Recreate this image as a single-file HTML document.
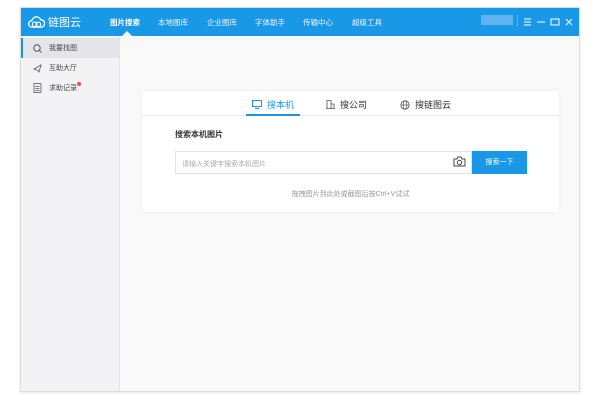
<!DOCTYPE html>
<html><head><meta charset="utf-8"><style>
*{margin:0;padding:0;box-sizing:border-box}
body{width:600px;height:400px;background:#fff;position:relative;overflow:hidden;font-family:"Liberation Sans","Noto Sans CJK SC",sans-serif;}
.win{position:absolute;left:20px;top:7px;width:560px;height:385px;border:1px solid #ddd;background:#f9f9f9;box-shadow:0 1px 3px rgba(0,0,0,.1)}
.top{position:absolute;left:0;top:0;width:100%;height:28px;background:#1a98e8;color:#fff}
.logo{position:absolute;left:7px;top:6px;font-size:11px;display:flex;align-items:center;gap:3px}
.nav{position:absolute;left:89px;top:9px;font-size:7.5px;white-space:nowrap}
.nav span{position:absolute;top:0;opacity:.92}
.nav span.a{font-weight:bold;opacity:1}
.tri{position:absolute;left:101px;top:23px;width:0;height:0;border-left:5px solid transparent;border-right:5px solid transparent;border-bottom:5px solid #f9f9f9}
.side{position:absolute;left:0;top:28px;width:99px;bottom:0;background:#f3f3f5;border-right:1px solid #e3e3e3}
.it{height:20px;font-size:7px;color:#444;display:flex;align-items:center;padding-left:12px;gap:7px;position:relative}
.it.a{background:#e4e5e8;border-left:2px solid #1a98e8;padding-left:10px}
.card{position:absolute;left:121px;top:83px;width:417px;height:121px;background:#fff;border-radius:3px;box-shadow:0 0 3px rgba(0,0,0,.06)}
.tabs{height:25px;border-bottom:1px solid #e6e6e6;position:relative;font-size:9px;color:#333}
.tab{position:absolute;top:7px;display:flex;align-items:center;gap:5px}
.ul{position:absolute;left:104px;top:23px;width:54px;height:2px;background:#1a98e8}
</style></head><body>
<div class="win">
 <div class="top">
  <div class="logo"><svg width="17" height="13" viewBox="0 0 18 14"><path d="M4 12a3.5 3.5 0 0 1 0-7 5 5 0 0 1 9.5-1A4 4 0 0 1 14 12z" fill="none" stroke="#fff" stroke-width="1.4"/><circle cx="7" cy="9" r="2.5" fill="none" stroke="#fff" stroke-width="1.2"/><circle cx="11" cy="9" r="2.5" fill="none" stroke="#fff" stroke-width="1.2"/></svg><span>链图云</span></div>
  <div class="nav"><span class="a" style="left:0">图片搜索</span><span style="left:48px">本地图库</span><span style="left:97px">企业图库</span><span style="left:145px">字体助手</span><span style="left:193px">传输中心</span><span style="left:242px">超级工具</span></div>
  <div style="position:absolute;left:460px;top:7px;width:32px;height:10px;background:#5eb4ef"></div>
  <div style="position:absolute;left:496px;top:7px;width:1px;height:12px;background:#5cb3ee"></div>
  <svg style="position:absolute;left:502px;top:9px" width="52" height="10"><path d="M1 2h7M1 5h7M1 8h7M14 5h8M28 2h8v6h-8zM43 2l6 6M49 2l-6 6" fill="none" stroke="#fff" stroke-width="1"/></svg>
 </div>
 <div class="tri"></div>
 <div class="side">
  <div class="it a" style="margin-top:2px"><svg width="9" height="9"><circle cx="4" cy="4" r="3.2" fill="none" stroke="#555"/><path d="M6.3 6.3l2.3 2.3" stroke="#555"/></svg>我要找图</div>
  <div class="it"><svg width="9" height="9"><path d="M1 5l7-4-2 7-2-2z" fill="none" stroke="#555" stroke-width=".8"/></svg>互助大厅</div>
  <div class="it"><svg width="9" height="10"><rect x="1" y=".5" width="7" height="9" fill="none" stroke="#555" stroke-width=".8"/><path d="M2.5 3.5h4M2.5 5.5h4M2.5 7.5h4" stroke="#555" stroke-width=".7"/></svg>求助记录<span style="position:absolute;left:56px;top:4px;width:4px;height:4px;border-radius:50%;background:#f44"></span></div>
 </div>
 <div class="card">
  <div class="tabs">
   <div class="tab" style="left:110px;color:#1a98e8"><svg width="10" height="9"><rect x=".5" y=".5" width="9" height="6" fill="none" stroke="#1a98e8"/><path d="M3 8.5h4" stroke="#1a98e8"/></svg>搜本机</div>
   <div class="tab" style="left:184px"><svg width="9" height="9"><path d="M1 8.5V.5h4v8M5 4h3v4.5M0 8.5h9" fill="none" stroke="#555" stroke-width=".8"/></svg>搜公司</div>
   <div class="tab" style="left:258px"><svg width="10" height="10"><circle cx="5" cy="5" r="4.2" fill="none" stroke="#555" stroke-width=".8"/><ellipse cx="5" cy="5" rx="1.8" ry="4.2" fill="none" stroke="#555" stroke-width=".7"/><path d="M1 5h8" stroke="#555" stroke-width=".7"/></svg>搜链图云</div>
   <div class="ul"></div>
  </div>
  <div style="position:absolute;left:33px;top:38px;font-size:8px;font-weight:bold;color:#333">搜索本机图片</div>
  <div style="position:absolute;left:33px;top:60px;width:297px;height:23px;border:1px solid #e3e3e3;font-size:7px;color:#aaa;padding:7px 6px">请输入关键字搜索本机图片</div>
  <svg style="position:absolute;left:311px;top:65px" width="13" height="11"><path d="M1 3h3l1-2h3l1 2h3v7H1z" fill="none" stroke="#444" stroke-width="1"/><circle cx="6.5" cy="6.5" r="2.2" fill="none" stroke="#444"/></svg>
  <div style="position:absolute;left:330px;top:60px;width:55px;height:23px;background:#1a98e8;color:#fff;font-size:7px;text-align:center;line-height:23px">搜索一下</div>
  <div style="position:absolute;left:0;width:100%;top:98px;text-align:center;font-size:7px;color:#999;padding-left:0">拖拽图片到此处或截图后按Ctrl+V试试</div>
 </div>
</div>
</body></html>
